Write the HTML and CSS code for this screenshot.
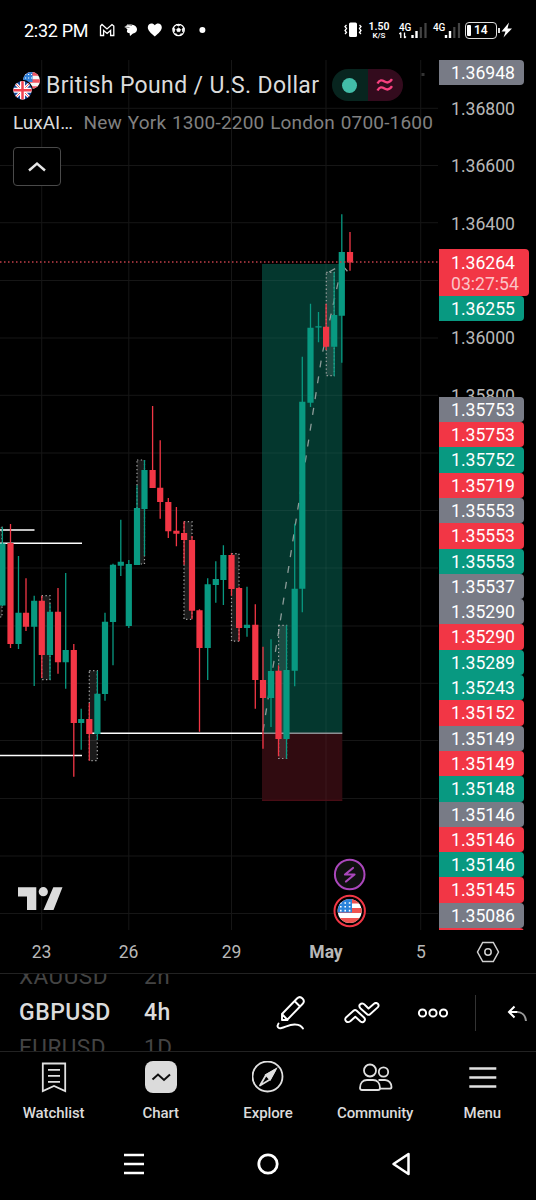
FILE: index.html
```html
<!DOCTYPE html>
<html lang="en">
<head>
    <meta charset="UTF-8">
    <title>GBPUSD 4h</title>
    <meta name="viewport" content="width=device-width, initial-scale=1.0">
    <link rel="stylesheet" href="styles.css">
</head>
<body>

<header class="status">
    <span class="clock">2:32 PM</span>
    <svg class="status-icons" width="110" height="20" viewBox="98 20 110 20">
        <path d="M100.500 35.500v-9.500l1.500-1.500 5 4.500 5-4.500 1.800 1.500v9.500h-3.200v-5l-3.500 3-3.500-3v5z" fill="none" stroke="#fff" stroke-width="1.300"/>
        <path d="M125 27c1-2.500 9-4 11.500 0.500 1.500 3-0.500 5.500-3.500 6l-3 2.500-0.500-3c-3 0-3-2-2-3.500z" fill="#fff"/>
        <path d="M124.500 27l5 0.500M127 24.500l5 1" stroke="#888" stroke-width="1" fill="none"/>
        <path d="M154.800 36.500c-4-3.500-7-6-7-9.300 0-4.200 5-5 7-2 2-3 7-2.200 7 2 0 3.300-3 5.800-7 9.300z" fill="#fff"/>
        <circle cx="178.600" cy="30" r="5.700" fill="none" stroke="#fff" stroke-width="1.200"/>
        <path d="M178.600 28l1.900 1.400-0.700 2.200h-2.400l-0.700-2.200zM176 24.500h5l-2.500 1.500zM173 28l2 1-1 3zM184 28l-2 1 1 3zM175.500 33l1.500 2M181.500 33l-1.500 2" fill="#fff" stroke="#fff" stroke-width="0.800"/>
        <circle cx="202.400" cy="30" r="3" fill="#fff"/>
    </svg>
    <svg class="vibrate" width="20" height="18" viewBox="343 21 20 18">
        <rect x="349" y="22.500" width="8" height="14.500" rx="1.500" fill="#fff"/>
        <path d="M346.500 25l-1.500 1.500 1.500 2-1.500 2 1.500 2-1.500 1.500M359.500 25l1.500 1.500-1.500 2 1.500 2-1.500 2 1.500 1.500" fill="none" stroke="#fff" stroke-width="1.300"/>
    </svg>
    <div class="speed"><b>1.50</b><span>K/S</span></div>
    <div class="signal">
        <b>4G</b>
        <svg width="29" height="17" viewBox="399 21 29 17">
            <path d="M400.800 37v-5.500M399.300 33l1.500-1.500M404.500 31.500v5.500M404.500 37l1.500-1.500" stroke="#fff" stroke-width="1.300" fill="none"/>
            <path d="M412.500 37v-3M416.500 37v-7" stroke="#fff" stroke-width="2.400"/>
            <path d="M420.800 37v-11M425.500 37v-15" stroke="#444" stroke-width="2.200"/>
        </svg>
    </div>
    <div class="signal second">
        <b>4G</b>
        <svg width="29" height="17" viewBox="399.500 21 29 17">
            <path d="M412.500 37v-3M416.500 37v-7" stroke="#fff" stroke-width="2.400"/>
            <path d="M420.800 37v-11M425.500 37v-15" stroke="#444" stroke-width="2.200"/>
        </svg>
    </div>
    <div class="battery"><i></i>14</div>
    <svg class="bolt" width="14" height="18" viewBox="500 21 14 18">
        <path d="M509 22.500l-7.500 9h4l-2 6 8.500-9h-4.500z" fill="#fff"/>
    </svg>
</header>

<main class="chart">
    <div class="pane">
        <svg class="plot" width="439" height="870" viewBox="0 60 439 870">
            <!-- grid -->
            <path class="grid" d="M41.700 60V930M128.800 60V930M231.500 60V930M326 60V930M420.700 60V930M0 108.300H438M0 165.500H438M0 222.700H438M0 280.500H438M0 338H438M0 395.300H438M0 453H438M0 510.500H438M0 568H438M0 626H438M0 683.300H438M0 740.500H438M0 798.500H438M0 856H438M0 913.500H438"/>

            <!-- levels -->
            <path class="level" d="M0 530H34.500M0 543.300H82M0 755.500H82M92 733.300H262"/>

            <!-- long position -->
            <rect x="262" y="264" width="80.300" height="469" fill="#04372e"/>
            <rect x="262" y="733" width="80.300" height="67.500" fill="#300b10"/>
            <path d="M326 264V800M262 280.500H342M262 338H342M262 395.300H342M262 453H342M262 510.500H342M262 568H342M262 626H342M262 683.300H342" stroke="#fff" stroke-opacity=".06"/>
            <path d="M262 733.300H342.300" stroke="#8d8f93" stroke-width="1.500"/>
            <path d="M262 800.300H342.300" stroke="#561019"/>
            <path class="trend" d="M263 731L322 355L342 265M329 272L342 265L349 273"/>

            <!-- sessions -->
            <g class="session">
                <rect x="-6" y="527" width="8" height="90"/>
                <rect x="41.700" y="595.700" width="8.300" height="84"/>
                <rect x="89.300" y="670.700" width="8" height="90"/>
                <rect x="137" y="460" width="7.500" height="104"/>
                <rect x="184" y="521.700" width="8" height="97.600"/>
                <rect x="231.500" y="553.700" width="7.500" height="87.500"/>
                <rect x="278.600" y="625.300" width="8" height="133.200"/>
                <rect x="326.300" y="272.300" width="8" height="103.400"/>
            </g>

            <!-- rising bars -->
            <path class="wick up" d="M2.400 527V606M18.500 556V649M34.200 595.700V686M50 604V680M65.700 573V688.700M81.200 708.700V749.700M97.400 670.700V740M105 612.700V700.700M113 563.700V665.300M120.800 519.700V576M128.800 560V628M137 485.300V565M144.500 460V555.700M207.700 578.300V680M215.800 561.300V602.700M223.400 545.300V605M247 586.700V636.700M271 639.300V727M286.500 625.300V758.700M294.700 523.700V686.300M302.300 356.700V612.300M310.500 303.700V407M318.500 312V342.300M334.200 272.300V376.300M341.800 214.300V362.700"/>
            <path class="candle up" d="M2.400 543.500V605.500M18.500 612.700V644M34.200 600.700V626.700M50 611.700V655M65.700 650V662.300M81.200 719V723M97.400 693.700V734M105 621.700V694M113 564.700V622M120.800 561.700V565.700M128.800 564V626M137 508V565M144.500 470V509M207.700 584.300V648M215.800 579V585M223.400 555V580M247 624.700V628M271 671V698M286.500 670V739M294.700 588.700V670.700M302.300 401.700V588.700M310.500 327.700V402.700M318.500 326.200V327.500M334.200 315V346.700M341.800 252V315.700"/>

            <!-- falling bars -->
            <path class="wick down" d="M10.500 524V648M26 578.300V631M41.800 595.700V678M58 588V673.700M73.800 644V776.700M89.300 703V760.700M152.600 406V488M160.200 440.300V518.700M168.300 498V538M176.400 507V546.300M184.100 521.300V564.700M192 536V619.300M199.500 609.300V731.700M231.500 553.300V595.700M239.100 586.700V641.300M255.300 604.300V708.700M263 646.700V748.700M278.500 665.300V756.300M326.100 303.700V350M350 232V270.700"/>
            <path class="candle down" d="M10.500 543V644M26 612.700V626.700M41.800 600.700V655M58 611.700V662.300M73.800 650V723M89.300 719V734M152.600 470V488M160.200 487.700V502M168.300 502V531.300M176.400 530.700V533.700M184.100 533V540M192 540V610.700M199.500 610.300V648M231.500 555V589M239.100 588V628M255.300 624.700V680M263 680V698M278.500 670.700V739M326.100 326.700V346.700M350 252V262.500"/>

            <path d="M0 262H439" stroke="#c23f49" stroke-width="1.400" stroke-dasharray="1.500 2.500"/>
            <rect x="421.500" y="73" width="3" height="3" fill="#333"/>

            <!-- logo -->
            <path d="M18 887.300h18.300V910h-9.300v-13.600h-9zM53.300 887.300h9.200l-9 22.700h-10z" fill="#dbdbdb"/>
            <circle cx="43.300" cy="891.700" r="4.600" fill="#dbdbdb"/>

            <!-- events -->
            <circle cx="349.700" cy="874.500" r="14.800" fill="#101010" stroke="#ab47bc" stroke-width="2"/>
            <path d="M353 868l-8 6.500h9.500l-8.500 7" fill="none" stroke="#ab47bc" stroke-width="2.200" stroke-linejoin="round" stroke-linecap="round"/>
            <circle cx="349.700" cy="911" r="15.200" fill="#000" stroke="#f23645" stroke-width="2"/>
            <clipPath id="us"><circle cx="349.700" cy="911" r="12"/></clipPath>
            <g clip-path="url(#us)">
                <rect x="337" y="899" width="25" height="25" fill="#fff"/>
                <path d="M337 901h25M337 910.500h25M337 920.500h25" stroke="#ef5350" stroke-width="5"/>
                <rect x="337" y="899" width="15" height="13.500" fill="#2c83da"/>
                <path d="M340 903h11M340 906.800h11M340 910.600h11" stroke="#fff" stroke-width="1.600" stroke-dasharray="1.600 2.800"/>
            </g>
        </svg>

        <div class="legend">
            <div class="symbol">
                <svg width="28" height="29" viewBox="13 70 28 29">
                    <clipPath id="usa"><circle cx="31.500" cy="79.500" r="8.500"/></clipPath>
                    <g clip-path="url(#usa)">
                        <rect x="22" y="70" width="19" height="19" fill="#f5f5f5"/>
                        <path d="M22 73h19M22 80h19M22 87h19" stroke="#ef5361" stroke-width="3.500"/>
                        <rect x="22" y="70" width="10.500" height="11" fill="#2f80d8"/>
                        <path d="M25 73.500h7M25 77h7" stroke="#fff" stroke-width="1.200" stroke-dasharray="1.200 1.800"/>
                    </g>
                    <circle cx="22.500" cy="89.300" r="10.500" fill="#000"/>
                    <clipPath id="gb"><circle cx="22.500" cy="89.300" r="9.200"/></clipPath>
                    <g clip-path="url(#gb)">
                        <rect x="13" y="80" width="19" height="19" fill="#1a4a9c"/>
                        <path d="M13 80l19 19M32 80l-19 19" stroke="#fff" stroke-width="3"/>
                        <path d="M13 80l19 19M32 80l-19 19" stroke="#ef5361" stroke-width="1"/>
                        <path d="M22.500 80v19M13 89.300h19" stroke="#fff" stroke-width="5"/>
                        <path d="M22.500 80v19M13 89.300h19" stroke="#f0404f" stroke-width="2.500"/>
                    </g>
                </svg>
                <h1>British Pound / U.S. Dollar</h1>
                <div class="market">
                    <span class="open"><i></i></span>
                    <span class="approx">
                        <svg width="18" height="14" viewBox="0 0 18 14" fill="none" stroke="#f7407f" stroke-width="2.400">
                            <path d="M1.500 5.500c2-4 4.500-3.500 7-2s5 1.500 7.500-2.300M1.500 12.500c2-4 4.500-3.500 7-2s5 1.500 7.500-2.300"/>
                        </svg>
                    </span>
                </div>
            </div>
            <div class="study"><span>LuxAI…</span><span class="inputs">New York 1300-2200 London 0700-1600</span></div>
            <button class="collapse">
                <svg width="18" height="11" viewBox="0 0 18 11"><path d="M1 9.500l8-7 8 7" fill="none" stroke="#e6e6e6" stroke-width="2.400"/></svg>
            </button>
        </div>
    </div>

    <aside class="scale">
        <div class="tag gray">1.36948</div>
        <div class="price first">1.36800</div>
        <div class="price">1.36600</div>
        <div class="price">1.36400</div>
        <div class="tag red last">1.36264<small>03:27:54</small></div>
        <div class="tag green">1.36255</div>
        <div class="price near">1.36000</div>
        <div class="price">1.35800</div>
        <div class="stack">
            <div class="tag gray">1.35753</div>
            <div class="tag red">1.35753</div>
            <div class="tag green">1.35752</div>
            <div class="tag red">1.35719</div>
            <div class="tag gray">1.35553</div>
            <div class="tag red">1.35553</div>
            <div class="tag green">1.35553</div>
            <div class="tag gray">1.35537</div>
            <div class="tag gray">1.35290</div>
            <div class="tag red">1.35290</div>
            <div class="tag green">1.35289</div>
            <div class="tag green">1.35243</div>
            <div class="tag red">1.35152</div>
            <div class="tag gray">1.35149</div>
            <div class="tag red">1.35149</div>
            <div class="tag green">1.35148</div>
            <div class="tag gray">1.35146</div>
            <div class="tag red">1.35146</div>
            <div class="tag green">1.35146</div>
            <div class="tag red">1.35145</div>
            <div class="tag gray">1.35086</div>
            <div class="tag red"></div>
        </div>
    </aside>
</main>

<div class="dates">
    <span>23</span>
    <span>26</span>
    <span>29</span>
    <span class="month">May</span>
    <span>5</span>
    <svg width="24" height="22" viewBox="0 0 24 22" fill="none" stroke="#d0d0d0" stroke-width="1.500">
        <path d="M6.700 1.500h10.600L22.500 11l-5.200 9.500H6.700L1.500 11z"/>
        <circle cx="12" cy="11" r="3.200"/>
    </svg>
</div>

<div class="toolbar">
    <div class="wheel symbols"><span>XAUUSD</span><b>GBPUSD</b><span>EURUSD</span></div>
    <div class="wheel frames"><span>2h</span><b>4h</b><span>1D</span></div>
    <div class="tools">
        <svg width="32" height="36" viewBox="275 994 32 36" fill="none" stroke="#fff" stroke-width="1.900" stroke-linejoin="round" stroke-linecap="round">
            <path d="M282 1013l15-15.500c2-2 4-1.500 5.500 0s2 3.500 0 5.500l-15.500 16h-5zM282 1013l5.500 6M294.500 1000l5.500 5.500"/>
            <path d="M278.500 1022.500c-2 3-0.500 5.500 3 4.500 5-1.500 9-4 14-3.500 4 0.300 6 1.500 7.500 4"/>
        </svg>
        <svg width="36" height="22" viewBox="344 1001 36 22" fill="none" stroke="#fff" stroke-width="1.900" stroke-linejoin="round">
            <path d="M346 1016.500l7.500-6.700c1-0.900 2.200-0.900 3.200 0l7.300 6.700c2.500 2.700-0.700 6-3.500 4l-5.200-4.700-5 4.500c-3.200 2.300-6.700-1.300-4.300-3.800z"/>
            <path d="M360 1003.500c2-2 4-0.700 5.500 1l3 3 5.500-4.800c3-2.200 6 1.100 3.700 3.700l-7.600 6.800c-1 0.900-2 0.900-3 0l-6.500-5.700c-1.500-1.500-1.700-2.800-0.600-4z"/>
        </svg>
        <svg width="32" height="12" viewBox="0 0 32 12" fill="none" stroke="#fff" stroke-width="2">
            <circle cx="5.500" cy="6" r="3.600"/><circle cx="16" cy="6" r="3.600"/><circle cx="26.500" cy="6" r="3.600"/>
        </svg>
        <i class="divider"></i>
        <svg width="20" height="18" viewBox="507 1003 20 18" fill="none" stroke-width="2">
            <path d="M509 1011h9" stroke="#fff"/>
            <path d="M517 1011c5 0 8.500 3.500 9 9" stroke="#999"/>
            <path d="M514.500 1005.500l-5.500 5.500 5.500 5.500" stroke="#fff"/>
        </svg>
    </div>
</div>

<nav class="tabs">
    <a>
        <svg width="32" height="32" viewBox="0 0 32 32" fill="none" stroke="#e0e0e0" stroke-width="1.800">
            <path d="M4.800 2.500h22.400v27.500L16 25 4.800 30z"/>
            <path d="M10 8.800h12M10 14.800h12M10 20.800h12"/>
        </svg>
        Watchlist
    </a>
    <a>
        <svg width="32" height="32" viewBox="0 0 32 32">
            <rect width="32" height="32" rx="8" fill="#dbdbdb"/>
            <path d="M7.500 18.500l5.500-5 6 5.500 6-5.500" fill="none" stroke="#0f0f0f" stroke-width="2"/>
        </svg>
        Chart
    </a>
    <a>
        <svg width="32" height="32" viewBox="0 0 32 32" fill="none" stroke="#e0e0e0" stroke-width="1.800">
            <circle cx="15.500" cy="15.500" r="15"/>
            <path d="M23.500 8.500l-9.500 5.500-6 10.500 10-6z" stroke-linejoin="round"/>
            <path d="M23.500 8.500l-9.500 5.500 4 4.500z" fill="#e0e0e0"/>
        </svg>
        Explore
    </a>
    <a>
        <svg width="36" height="32" viewBox="0 0 36 32" fill="none" stroke="#e0e0e0" stroke-width="1.800">
            <circle cx="13" cy="9.500" r="6"/>
            <circle cx="26.500" cy="11" r="4.700"/>
            <path d="M5 29c-1.500 0-2-1-2-2 0-5 3-8 7-8h6c4 0 7 3 7 8 0 1-0.500 2-2 2z"/>
            <path d="M21.500 19h6.500c4 0 6.500 3.500 6.500 7 0 1.300-0.700 1.700-2 1.700h-9.500"/>
        </svg>
        Community
    </a>
    <a>
        <svg width="32" height="32" viewBox="0 0 32 32">
            <path d="M3.300 7.500h27M3.300 16.500h27M3.300 25.500h27" stroke="#e0e0e0" stroke-width="2.300"/>
        </svg>
        Menu
    </a>
</nav>

<footer class="system">
    <svg width="20" height="22" viewBox="0 0 20 22"><path d="M0 2h20M0 11h20M0 20h20" stroke="#fff" stroke-width="2.600"/></svg>
    <svg width="22" height="22" viewBox="0 0 22 22"><circle cx="11" cy="11" r="9.200" fill="none" stroke="#fff" stroke-width="2.800"/></svg>
    <svg width="20" height="24" viewBox="0 0 20 24"><path d="M17.500 2v20L2.500 12z" fill="none" stroke="#fff" stroke-width="2.500" stroke-linejoin="round"/></svg>
</footer>

</body>
</html>
```
FILE: styles.css
```css
* {
    box-sizing: border-box;
}

body {
    margin: 0;
    width: 536px;
    height: 1200px;
    overflow: hidden;
    background: #000;
    color: #dbdbdb;
    font-family: Roboto, "Liberation Sans", sans-serif;
}

svg {
    display: block;
    flex: none;
}

/* status bar */
.status {
    display: flex;
    align-items: center;
    height: 60px;
    padding-left: 24px;
    color: #fff;
}

.clock {
    width: 74px;
    font-size: 18px;
    letter-spacing: -.3px;
    white-space: nowrap;
}

.vibrate {
    margin-left: 135px;
}

.speed {
    display: flex;
    flex-direction: column;
    align-items: center;
    width: 22px;
    margin-left: 5px;
    font-size: 10.500px;
    line-height: 11px;
}

.speed b {
    font-weight: 600;
}

.speed span {
    font-size: 8px;
    font-weight: 600;
    line-height: 8px;
}

.signal {
    position: relative;
    margin-left: 9px;
}

.signal b {
    position: absolute;
    top: 0;
    left: 0;
    font-size: 10px;
    font-weight: 500;
    line-height: 12px;
    letter-spacing: -.2px;
}

.signal.second {
    margin-left: 5px;
}

.battery {
    position: relative;
    display: flex;
    align-items: center;
    width: 32px;
    height: 17px;
    margin-left: 3px;
    border: 1.500px solid #ddd;
    border-radius: 4px;
    font-size: 12px;
    font-weight: 600;
}

.battery i {
    width: 4px;
    height: 11px;
    margin: 0 3px 0 1px;
    border-radius: 1px;
    background: #fff;
}

.battery::after {
    content: "";
    position: absolute;
    right: -4px;
    top: 5px;
    width: 2px;
    height: 5px;
    background: #ddd;
}

.bolt {
    margin-left: 3px;
}

/* chart */
.chart {
    display: flex;
    height: 870px;
}

.pane {
    position: relative;
    width: 439px;
}

.grid {
    stroke: #161616;
    stroke-width: 1;
    fill: none;
}

.level {
    stroke: #fff;
    stroke-width: 1.500;
}

.wick {
    stroke-width: 1.300;
}

.candle {
    stroke-width: 6.200;
}

.up {
    stroke: #089981;
}

.down {
    stroke: #f23645;
}

.session rect {
    fill: #fff;
    fill-opacity: .1;
    stroke: #a5a5a5;
    stroke-width: 1.200;
    stroke-dasharray: 1.300 2.500;
}

.trend {
    fill: none;
    stroke: #8d9c99;
    stroke-width: 1.300;
    stroke-dasharray: 7 9;
}

.legend {
    position: absolute;
    top: 0;
    left: 13px;
}

.symbol {
    display: flex;
    align-items: center;
    height: 50px;
}

.symbol h1 {
    width: 286px;
    margin: 0 0 0 5px;
    font-size: 23px;
    font-weight: 400;
    letter-spacing: .35px;
    white-space: nowrap;
}

.market {
    display: flex;
    width: 71px;
    height: 32px;
    border-radius: 16px;
    overflow: hidden;
}

.market span {
    display: flex;
    flex: 1;
    align-items: center;
    justify-content: center;
}

.market .open {
    background: #08251f;
}

.market .open i {
    width: 15px;
    height: 15px;
    border-radius: 50%;
    background: #42bda8;
}

.market .approx {
    background: #330b1d;
}

.study {
    display: flex;
    height: 26px;
    font-size: 19px;
    line-height: 26px;
    white-space: nowrap;
}

.study .inputs {
    margin-left: 10.500px;
    letter-spacing: .2px;
    word-spacing: .8px;
    color: #808080;
}

.collapse {
    display: flex;
    align-items: center;
    justify-content: center;
    width: 48px;
    height: 39px;
    margin-top: 11px;
    padding: 0;
    border: 1px solid #4a4a4a;
    border-radius: 4px;
    background: #000;
}

/* price scale */
.scale {
    width: 97px;
    height: 870px;
    overflow: hidden;
    font-size: 17.600px;
}

.price {
    height: 25px;
    margin-top: 32.400px;
    padding-left: 12px;
    line-height: 26.500px;
    color: #b8b8b8;
}

.price.first {
    margin-top: 10.500px;
}

.price.near {
    margin-top: 4.300px;
}

.tag {
    width: 85px;
    height: 25.300px;
    padding-left: 12px;
    border-radius: 0 4px 4px 0;
    line-height: 26.500px;
    color: #fff;
}

.tag.last {
    width: 90px;
    height: 46.700px;
    margin-top: 13.300px;
    padding-top: 1px;
}

.tag small {
    display: block;
    font-size: 17.600px;
    line-height: 16px;
    color: #fbc3c7;
}

.gray {
    background: #787b86;
}

.red {
    background: #f23645;
}

.green {
    background: #089981;
}

.stack {
    position: relative;
    margin-top: -10.800px;
}

/* time scale */
.dates {
    display: grid;
    grid-template-columns: 83px 91px 115px 74px 116px 57px;
    align-items: center;
    height: 43px;
    padding-top: 1px;
    font-size: 17.500px;
    text-align: center;
    color: #b8b8b8;
}

.dates svg {
    margin-left: -3px;
}

.month {
    font-weight: 700;
}

/* toolbar */
.toolbar {
    display: flex;
    height: 79px;
    border-top: 1px solid #222;
    border-bottom: 1px solid #222;
}

.wheel {
    display: flex;
    flex-direction: column;
    justify-content: center;
    height: 77px;
    overflow: hidden;
    font-size: 23px;
    line-height: 35.500px;
    letter-spacing: .5px;
}

.wheel span {
    flex: none;
    font-size: 22.500px;
    color: #444;
}

.wheel b {
    flex: none;
    font-weight: 500;
}

.symbols {
    width: 125px;
    margin-left: 19px;
}

.frames {
    width: 130px;
}

.tools {
    display: flex;
    align-items: center;
}

.tools svg:nth-child(1) {
    margin-left: 1px;
}

.tools svg:nth-child(2) {
    margin-left: 37px;
}

.tools svg:nth-child(3) {
    margin-left: 37px;
}

.divider {
    width: 1px;
    height: 36px;
    margin: 0 31px 0 26px;
    background: #333;
}

/* bottom tabs */
.tabs {
    display: grid;
    grid-template-columns: repeat(5, 107.200px);
    height: 78px;
    padding-top: 9px;
}

.tabs a {
    display: flex;
    flex-direction: column;
    align-items: center;
    gap: 11px;
    font-size: 15px;
    font-weight: 500;
    line-height: 18px;
    letter-spacing: -.1px;
}

/* android buttons */
.system {
    display: flex;
    align-items: center;
    justify-content: space-between;
    height: 68px;
    padding: 0 125px 0 124px;
}
```
